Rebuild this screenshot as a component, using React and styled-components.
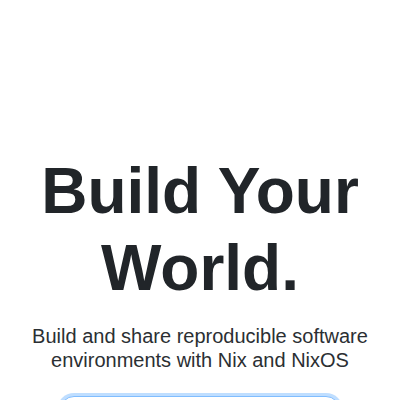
import React from 'react';
import styled, { createGlobalStyle } from 'styled-components';

const GlobalStyle = createGlobalStyle`
  * {
    box-sizing: border-box;
  }
  html, body {
    margin: 0;
    padding: 0;
    background: #ffffff;
    font-family: "Liberation Sans", Arial, sans-serif;
  }
`;

const Hero = styled.section`
  align-items: center;
  display: flex;
  flex-direction: column;
  padding: 153px 16px 0;
  text-align: center;
`;

const Title = styled.h1`
  color: #212529;
  font-size: 64px;
  font-weight: 700;
  line-height: 1.2;
  margin: 0 0 17px;
`;

const Subtitle = styled.p`
  color: #2b2f33;
  font-size: 20px;
  font-weight: 400;
  line-height: 1.2;
  margin: 0 0 24px;
`;

const SearchInput = styled.input`
  background: #ffffff;
  border: 1px solid #80bdff;
  border-radius: 14px;
  box-shadow: 0 0 0 3px rgba(0, 123, 255, 0.25);
  font-family: inherit;
  font-size: 16px;
  height: 48px;
  outline: none;
  padding: 0 16px;
  width: 280px;
`;

export default function App() {
  return (
    <>
      <GlobalStyle />
      <Hero>
        <Title>Build Your World.</Title>
        <Subtitle>
          Build and share reproducible software environments with Nix and NixOS
        </Subtitle>
        <SearchInput type="text" aria-label="Search" />
      </Hero>
    </>
  );
}
